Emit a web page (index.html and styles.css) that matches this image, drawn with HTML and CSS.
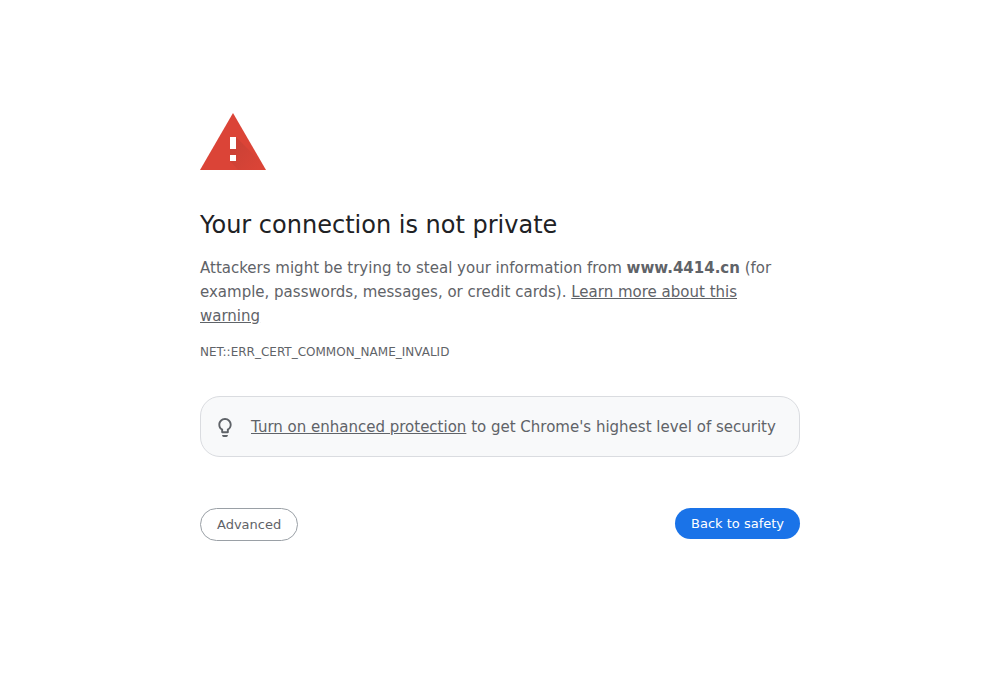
FILE: index.html
```html
<!DOCTYPE html>
<html lang="en">
<head>
  <meta charset="UTF-8">
  <meta name="viewport" content="width=device-width, initial-scale=1.0">
  <title>Privacy error</title>
  <link rel="stylesheet" href="styles.css">
</head>
<body>
  <main class="interstitial">
    <svg class="icon" viewBox="0 0 66 57" aria-hidden="true">
      <defs>
        <linearGradient id="shade" x1="30" y1="30" x2="60" y2="56" gradientUnits="userSpaceOnUse">
          <stop offset="0" stop-color="#262626" stop-opacity=".1"/>
          <stop offset="1" stop-color="#262626" stop-opacity="0"/>
        </linearGradient>
      </defs>
      <path d="M0 57h66L33 0z" fill="#db4437"/>
      <path d="M36 24l26 26 4 7H38l-8-9V24z" fill="url(#shade)"/>
      <path d="M30 24h6v12h-6zM30 42h6v6h-6z" fill="#fff"/>
    </svg>

    <h1>Your connection is not private</h1>
    <p class="message">Attackers might be trying to steal your information from <strong>www.4414.cn</strong> (for example, passwords, messages, or credit cards). <a href="#">Learn more about this warning</a></p>
    <p class="error-code">NET::ERR_CERT_COMMON_NAME_INVALID</p>

    <div class="protection">
      <svg class="bulb" viewBox="4 2 16 20" aria-hidden="true">
        <path d="M9 20.500c0 .8.700 1.500 1.500 1.500h3c.8 0 1.500-.7 1.500-1.500V20H9v.5zM12 2C8.100 2 5 5.100 5 9c0 2.400 1.200 4.500 3 5.700V17c0 .5.4 1 1 1h6c.6 0 1-.5 1-1v-2.300c1.800-1.300 3-3.400 3-5.700 0-3.900-3.100-7-7-7zm2.900 11.100l-.9.600V16h-4v-2.300l-.9-.6C7.800 12.200 7 10.600 7 9c0-2.800 2.200-5 5-5s5 2.200 5 5c0 1.600-.8 3.200-2.100 4.100z"/>
      </svg>
      <p><a href="#">Turn on enhanced protection</a> to get Chrome's highest level of security</p>
    </div>

    <div class="buttons">
      <button type="button" class="secondary">Advanced</button>
      <button type="button" class="primary">Back to safety</button>
    </div>
  </main>
</body>
</html>
```

FILE: styles.css
```css
body {
  margin: 0;
  background: #fff;
  color: #5f6368;
  font-family: "DejaVu Sans", sans-serif;
  font-size: 15px;
  line-height: 24px;
}

.interstitial {
  box-sizing: border-box;
  max-width: 600px;
  margin: 0 auto;
  padding-top: 113px;
}

.icon {
  display: block;
  width: 66px;
  height: 57px;
}

h1 {
  margin: 40px 0 16px;
  color: #202124;
  font-size: 24px;
  font-weight: normal;
  line-height: 30px;
}

p {
  margin: 0;
}

a {
  color: inherit;
}

.error-code {
  margin-top: 16px;
  font-size: 12px;
  line-height: 16px;
}

.protection {
  display: flex;
  align-items: center;
  gap: 18px;
  margin-top: 36px;
  padding: 18px 16px 17px;
  border: 1px solid #dadce0;
  border-radius: 20px;
  background: #f8f9fa;
}

.bulb {
  flex: none;
  width: 16px;
  height: 19px;
  fill: #5f6368;
}

.buttons {
  display: flex;
  justify-content: space-between;
  align-items: flex-start;
  margin-top: 51px;
}

button {
  padding: 8px 16px;
  border: 0;
  border-radius: 20px;
  font-family: inherit;
  font-size: 13px;
  line-height: 15px;
  cursor: pointer;
}

.secondary {
  border: 1px solid #9aa0a6;
  background: #fff;
  color: #5f6368;
}

.primary {
  background: #1a73e8;
  color: #fff;
}
```
